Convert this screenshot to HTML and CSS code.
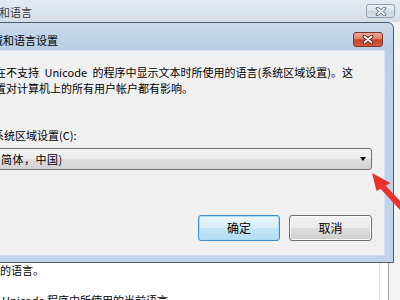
FILE: index.html
```html
<!DOCTYPE html>
<html lang="zh-CN">
<head>
<meta charset="utf-8">
<title>区域和语言设置</title>
<link rel="stylesheet" href="styles.css">
</head>
<body>
<div class="screen">
  <div class="bgwin">
    <div class="bg-title">
      <span class="bg-title-text">和语言</span>
      <span class="bg-close">
        <svg width="12" height="9" viewBox="0 0 12 9"><path d="M2.5 1.5 L9.5 7.5 M9.5 1.5 L2.5 7.5" stroke="#5a6675" stroke-width="3.6" stroke-linecap="round"/><path d="M2.5 1.5 L9.5 7.5 M9.5 1.5 L2.5 7.5" stroke="#fff" stroke-width="1.8" stroke-linecap="round"/></svg>
      </span>
    </div>
    <div class="bg-body">
      <div class="bg-text">
        <p class="bg-line">的语言。</p>
        <p class="bg-line bg-line-cut">Unicode 程序中所使用的当前语言</p>
      </div>
      <div class="bg-list"></div>
      <div class="bg-edge"></div>
    </div>
  </div>

  <div class="dialog">
    <div class="dlg-title">
      <span class="dlg-title-text">域和语言设置</span>
      <span class="dlg-close">
        <svg width="12" height="9" viewBox="0 0 12 9"><path d="M2.5 1.5 L9.5 7.5 M9.5 1.5 L2.5 7.5" stroke="#5b1a10" stroke-width="3.6" stroke-linecap="round"/><path d="M2.5 1.5 L9.5 7.5 M9.5 1.5 L2.5 7.5" stroke="#fff" stroke-width="1.8" stroke-linecap="round"/></svg>
      </span>
    </div>
    <div class="client">
      <p class="desc">在不支持 Unicode 的程序中显示文本时所使用的语言(系统区域设置)。这<br>置对计算机上的所有用户帐户都有影响。</p>
      <p class="label">系统区域设置(C):</p>
      <div class="combo">
        <span class="combo-text">简体，中国)</span>
        <span class="combo-arrow"></span>
      </div>
      <div class="buttons">
        <span class="btn btn-default">确定</span>
        <span class="btn btn-cancel">取消</span>
      </div>
    </div>
  </div>

  <svg class="arrow" width="400" height="300" viewBox="0 0 400 300">
    <line x1="382" y1="186" x2="406" y2="212" stroke="#e8322b" stroke-width="6"/>
    <polygon points="372,173 376.5,191 390.5,183" fill="#e8322b"/>
  </svg>
</div>
</body>
</html>
```

FILE: styles.css
```css
* { box-sizing: border-box; }
html, body { margin: 0; padding: 0; }
body {
  width: 400px;
  height: 300px;
  overflow: hidden;
  font-family: "Noto Sans CJK SC", "Noto Sans", sans-serif;
  font-size: 11px;
  color: #000;
  background: #fff;
}
p { margin: 0; }
.screen {
  position: relative;
  width: 400px;
  height: 300px;
  overflow: hidden;
}

/* background window */
.bgwin {
  display: flex;
  flex-direction: column;
  height: 300px;
}
.bg-title {
  height: 22px;
  flex: none;
  display: flex;
  align-items: flex-start;
  justify-content: space-between;
  background: linear-gradient(#e4eaf1, #d5dee8);
  padding-right: 5px;
}
.bg-title-text {
  margin-left: -1px;
  margin-top: 4px;
  line-height: 16px;
  color: #3e3e3e;
}
.bg-close {
  margin-top: 4px;
  width: 29px;
  height: 14px;
  border: 1px solid #909eaf;
  border-radius: 3px;
  background: linear-gradient(#eef2f6, #d9e1ea 50%, #cdd7e2 51%, #d8e0e9);
  display: flex;
  align-items: center;
  justify-content: center;
}
.bg-body {
  flex: 1;
  display: flex;
  background: #fff;
}
.bg-text {
  flex: 1;
  padding-top: 240px;
}
.bg-line {
  line-height: 16px;
  white-space: nowrap;
}
.bg-line-cut {
  margin-top: 14px;
  padding-left: 2px;
}
.bg-list {
  width: 10px;
  border-left: 1px solid #dcdcdc;
  border-right: 1px solid #a3a3a3;
  background: #fff;
}
.bg-edge {
  width: 11px;
  background: #f3f3f3;
}

/* dialog */
.dialog {
  position: absolute;
  left: -30px;
  top: 22px;
  width: 424px;
  height: 241px;
  border: 1px solid #4d5d6e;
  border-radius: 6px 6px 0 0;
  background: linear-gradient(#cadaeb 0px, #b9cde4 27px, #bdd2ea 60px, #bfd4eb 100%);
  padding: 0 8px 6px 8px;
  display: flex;
  flex-direction: column;
}
.dlg-title {
  height: 27px;
  flex: none;
  display: flex;
  align-items: flex-start;
  justify-content: space-between;
  padding-top: 9px;
}
.dlg-title-text {
  margin-left: 13px;
  line-height: 16px;
  color: #000;
}
.dlg-close {
  margin-right: 2px;
  width: 30px;
  height: 15px;
  border: 1px solid #833526;
  border-radius: 3px;
  background: linear-gradient(#eaa898 0%, #dc7f68 45%, #c6422b 52%, #d25a3f 100%);
  display: flex;
  align-items: center;
  justify-content: center;
}
.client {
  flex: 1;
  background: #f0f0f0;
  border: 1px solid #d6e2ee;
  padding: 13px 12px 0 14px;
  display: flex;
  flex-direction: column;
}
.desc {
  line-height: 16px;
  white-space: nowrap;
  margin-left: 1px;
  word-spacing: 3px;
}
.label {
  margin-top: 31px;
  line-height: 16px;
  margin-left: -1px;
  white-space: nowrap;
}
.combo {
  margin-top: 5px;
  height: 22px;
  border: 1px solid #707070;
  border-radius: 3px;
  background: linear-gradient(#f3f3f3 0%, #ececec 48%, #dedede 52%, #d2d2d2 100%);
  display: flex;
  align-items: center;
  justify-content: space-between;
  padding: 0 5px 0 6px;
}
.combo-text {
  line-height: 16px;
  white-space: nowrap;
  letter-spacing: 0.5px;
}
.combo-arrow {
  width: 0;
  height: 0;
  border-left: 3.5px solid transparent;
  border-right: 3.5px solid transparent;
  border-top: 4px solid #000;
}
.buttons {
  margin-top: 45px;
  display: flex;
  justify-content: flex-end;
  gap: 9px;
}
.btn {
  width: 82px;
  height: 26px;
  border-radius: 3px;
  display: flex;
  align-items: center;
  justify-content: center;
  line-height: 16px;
  font-size: 12px;
  color: #000;
}
.btn-default {
  border: 1px solid #3d8ccd;
  box-shadow: inset 0 0 0 1px #a8dcf7;
  background: linear-gradient(#eaf6fd 0%, #d9effb 48%, #c5e6f8 52%, #b3dcf3 100%);
}
.btn-cancel {
  width: 83px;
  border: 1px solid #707070;
  box-shadow: inset 0 0 0 1px #fafafa;
  background: linear-gradient(#f2f2f2 0%, #ebebeb 48%, #dddddd 52%, #cfcfcf 100%);
}

.arrow {
  position: absolute;
  left: 0;
  top: 0;
  pointer-events: none;
}
```
